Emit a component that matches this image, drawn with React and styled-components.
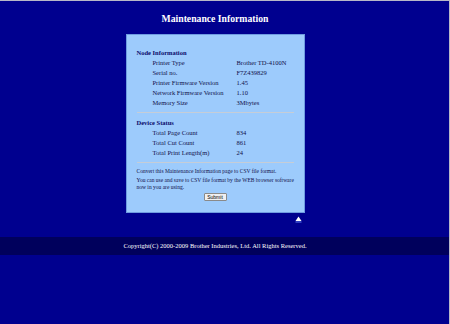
import styled, { createGlobalStyle } from 'styled-components';

const GlobalStyle = createGlobalStyle`
  html, body {
    margin: 0;
    padding: 0;
    background: #00008f;
  }
  body {
    font-family: 'Liberation Serif', 'Times New Roman', serif;
  }
`;

const Page = styled.div`
  /* frame edges */
  min-height: 324px;
  box-sizing: border-box;
  border-top: 1px solid #b8b8c8;
  border-right: 1px solid #b8b8c8;
  background-color: #00008f;
  display: flex;
  flex-direction: column;
`;

const Column = styled.div`
  width: 430px;
  display: flex;
  flex-direction: column;
  align-items: center;
`;

const Title = styled.h1`
  margin: 12px 0 9px;
  font-size: 9.7px;
  line-height: 12px;
  font-weight: 700;
  color: #ffffff;
`;

const Panel = styled.div`
  width: 157px;
  padding: 13px 10px 11px 10px;
  background-color: #9dcbfc;
  border: 1px solid #6f9ce0;
  color: #10104a;
`;

const SectionTitle = styled.h2`
  margin: 0;
  font-size: 6.5px;
  line-height: 10px;
  font-weight: 700;
  color: #0a0a6a;
`;

const InfoRow = styled.div`
  display: grid;
  grid-template-columns: 84px 1fr;
  padding-left: 16px;
  font-size: 6.5px;
  line-height: 10px;
  white-space: nowrap;
`;

const Divider = styled.hr`
  margin: 4px 0 ${(p) => p.$after || 5}px;
  border: none;
  height: 1px;
  background-color: #c6cdd6;
`;

const Note = styled.p`
  margin: 0 0 ${(p) => p.$gap || 0}px;
  font-size: 5.5px;
  line-height: 6.5px;
  white-space: nowrap;
  color: #10104a;
`;

const ButtonRow = styled.div`
  display: flex;
  justify-content: center;
  margin-top: 3px;
`;

const SubmitButton = styled.button`
  width: 23px;
  height: 8px;
  padding: 0;
  font-family: 'Liberation Sans', Arial, sans-serif;
  font-size: 5px;
  line-height: 6px;
  color: #000;
  background: #f0f0f0;
  border: 1px solid #8a8a8a;
  border-radius: 1px;
`;

const TopLinkRow = styled.div`
  width: 179px;
  display: flex;
  justify-content: flex-end;
  margin-top: 3px;
  padding-right: 3px;
  box-sizing: border-box;
`;

const Footer = styled.div`
  margin-top: 14px;
  height: 18px;
  background-color: #00005c;
`;

const FooterText = styled.p`
  width: 430px;
  margin: 0;
  text-align: center;
  font-size: 6.5px;
  line-height: 18px;
  color: #ffffff;
`;

const nodeInfo = [
  ['Printer Type', 'Brother TD-4100N'],
  ['Serial no.', 'F7Z439829'],
  ['Printer Firmware Version', '1.45'],
  ['Network Firmware Version', '1.10'],
  ['Memory Size', '3Mbytes'],
];

const deviceStatus = [
  ['Total Page Count', '834'],
  ['Total Cut Count', '861'],
  ['Total Print Length(m)', '24'],
];

function UpArrow() {
  return (
    <svg width='7' height='7' viewBox='0 0 7 7'>
      <polygon points='3.5,0.5 6.5,5 0.5,5' fill='#ffffff' />
      <rect x='0.5' y='5.5' width='6' height='1' fill='#5c7cf0' />
    </svg>
  );
}

export default function App() {
  return (
    <>
      <GlobalStyle />
      <Page>
        <Column>
          <Title>Maintenance Information</Title>
          <Panel>
            <SectionTitle>Node Information</SectionTitle>
            {nodeInfo.map(([label, value]) => (
              <InfoRow key={label}>
                <span>{label}</span>
                <span>{value}</span>
              </InfoRow>
            ))}
            <Divider />
            <SectionTitle>Device Status</SectionTitle>
            {deviceStatus.map(([label, value]) => (
              <InfoRow key={label}>
                <span>{label}</span>
                <span>{value}</span>
              </InfoRow>
            ))}
            <Divider $after={5} />
            <Note $gap={2.5}>
              Convert this Maintenance Information page to CSV file format.
            </Note>
            <Note>
              You can use and save to CSV file format by the WEB browser software
              <br />
              now in you are using.
            </Note>
            <ButtonRow>
              <SubmitButton type='button'>Submit</SubmitButton>
            </ButtonRow>
          </Panel>
          <TopLinkRow>
            <UpArrow />
          </TopLinkRow>
        </Column>
        <Footer>
          <FooterText>
            Copyright(C) 2000-2009 Brother Industries, Ltd. All Rights Reserved.
          </FooterText>
        </Footer>
      </Page>
    </>
  );
}
